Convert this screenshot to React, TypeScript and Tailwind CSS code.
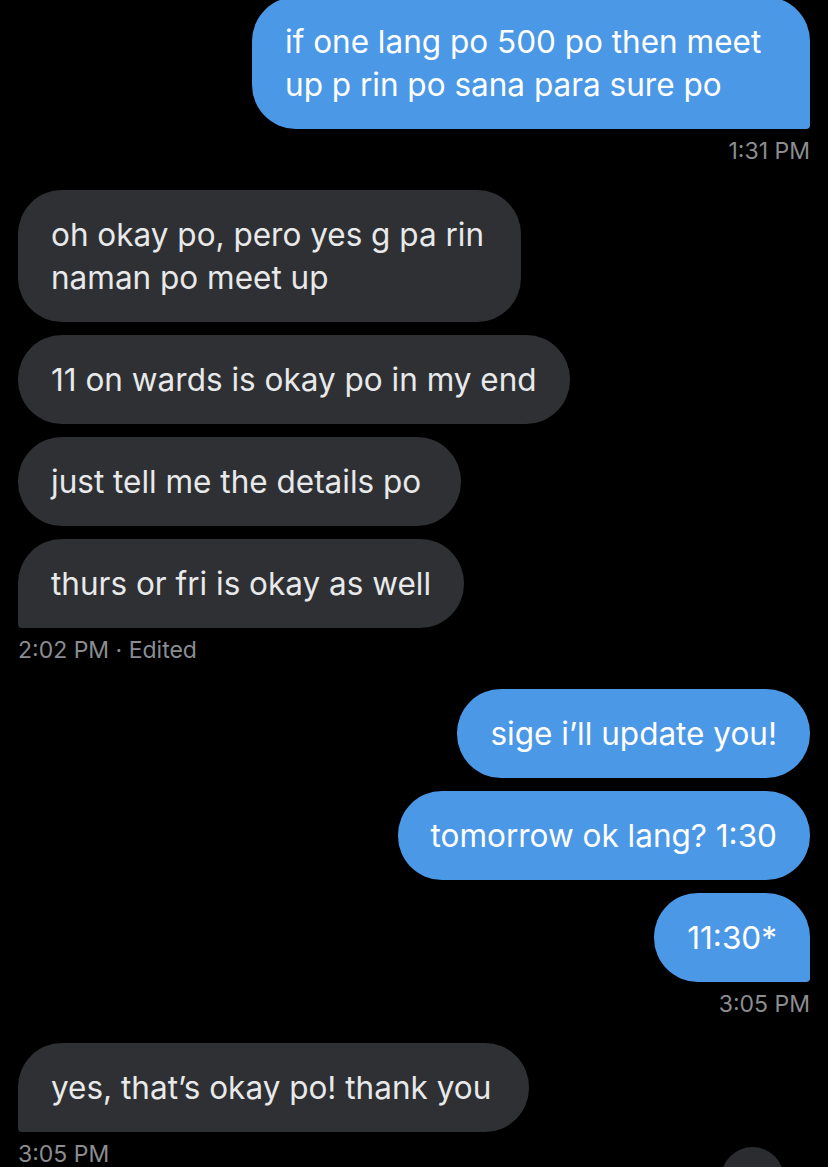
import React from "react";

type Msg = { lines: string[]; extra?: string };

function Bubble({ mine, lines, tail, extra }: { mine: boolean; lines: string[]; tail: boolean; extra?: string }) {
  const shape = mine
    ? tail
      ? "rounded-[44px] rounded-br-[4px]"
      : "rounded-[44px]"
    : tail
      ? "rounded-[44px] rounded-bl-[4px]"
      : "rounded-[44px]";
  const color = mine ? "bg-[#4b98e7] text-white" : "bg-[#2f3033] text-[#e7e9ea]";
  return (
    <div
      className={`${shape} ${color} pl-[33px] py-[23px] text-[31.5px] leading-[43px] whitespace-nowrap ${extra ?? "pr-[33px]"}`}
    >
      {lines.map((l, i) => (
        <div key={i}>{l}</div>
      ))}
    </div>
  );
}

function Group({ mine, msgs, stamp }: { mine: boolean; msgs: Msg[]; stamp: string }) {
  return (
    <div className={`flex flex-col gap-[13px] ${mine ? "items-end" : "items-start"}`}>
      {msgs.map((m, i) => (
        <Bubble key={i} mine={mine} lines={m.lines} extra={m.extra} tail={i === msgs.length - 1} />
      ))}
      <div className="-mt-[5px] text-[23px] leading-[28px] text-[#8b8d91]">{stamp}</div>
    </div>
  );
}

export default function App() {
  return (
    <div className="relative h-[1167px] w-full overflow-hidden bg-black font-['Inter',sans-serif]">
      <div className="-mt-[3px] flex flex-col gap-[25px] px-[18px]">
        <Group
          mine
          msgs={[
            {
              lines: ["if one lang po 500 po then meet", "up p rin po sana para sure po"],
              extra: "w-[558px] pr-[33px]",
            },
          ]}
          stamp="1:31 PM"
        />
        <Group
          mine={false}
          msgs={[
            { lines: ["oh okay po, pero yes g pa rin", "naman po meet up"], extra: "pr-[37px]" },
            { lines: ["11 on wards is okay po in my end"] },
            { lines: ["just tell me the details po"], extra: "pr-[40px]" },
            { lines: ["thurs or fri is okay as well"] },
          ]}
          stamp="2:02 PM · Edited"
        />
        <Group
          mine
          msgs={[
            { lines: ["sige i’ll update you!"] },
            { lines: ["tomorrow ok lang? 1:30"] },
            { lines: ["11:30*"] },
          ]}
          stamp="3:05 PM"
        />
        <Group
          mine={false}
          msgs={[{ lines: ["yes, that’s okay po! thank you"], extra: "pr-[38px]" }]}
          stamp="3:05 PM"
        />
      </div>
      <div className="absolute left-[721px] top-[1147px] h-[63px] w-[63px] rounded-full bg-[#2b2c2f]" />
    </div>
  );
}
